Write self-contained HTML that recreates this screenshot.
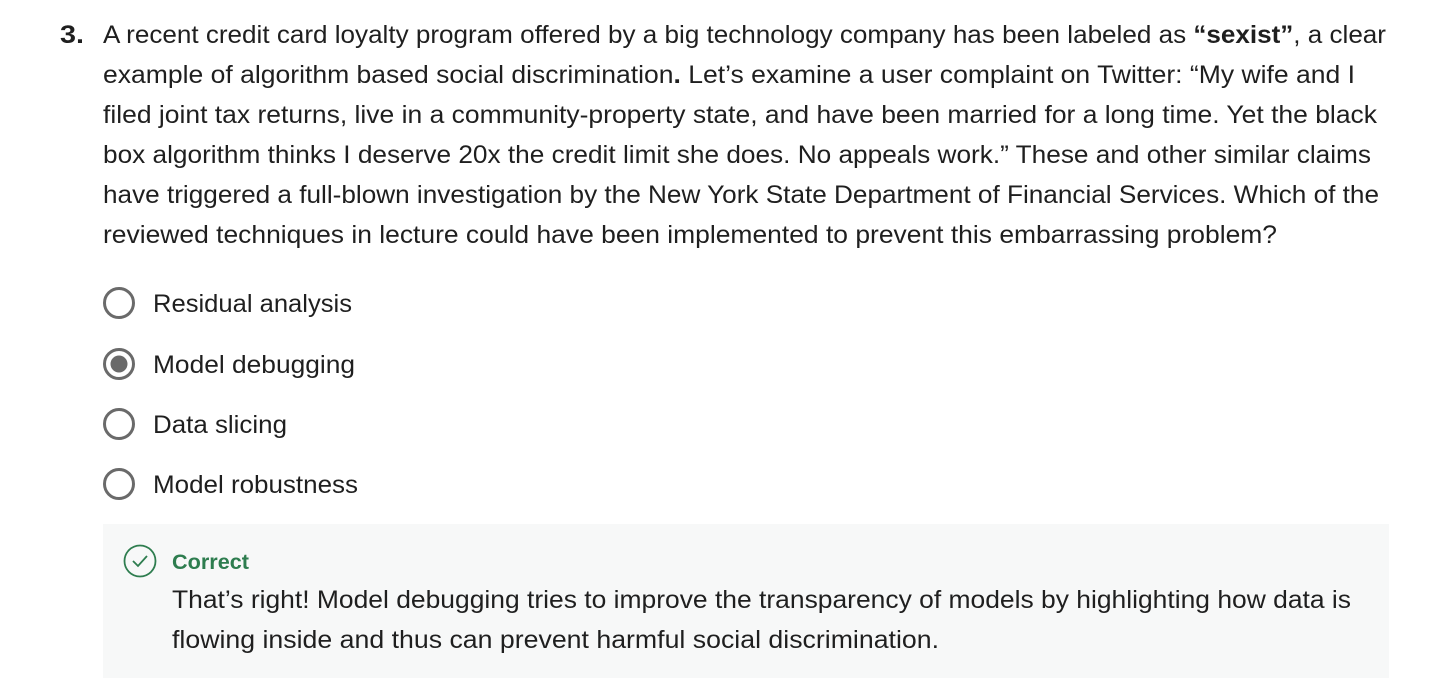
<!DOCTYPE html>
<html><head><meta charset="utf-8"><style>
html,body{margin:0;padding:0;background:#fff;width:1434px;height:696px;overflow:hidden}
svg{display:block}
text{font-family:"Liberation Sans",sans-serif;fill:#1f1f1f}
</style></head><body>
<svg width="1434" height="696" viewBox="0 0 1434 696" xmlns="http://www.w3.org/2000/svg">
<g font-size="25">
<text x="60" y="43" font-weight="bold" textLength="24" lengthAdjust="spacingAndGlyphs">3.</text>
<text x="103" y="43" textLength="1283" lengthAdjust="spacingAndGlyphs">A recent credit card loyalty program offered by a big technology company has been labeled as <tspan font-weight="bold">“sexist”</tspan>, a clear</text>
<text x="103" y="83" textLength="1252" lengthAdjust="spacingAndGlyphs">example of algorithm based social discrimination<tspan font-weight="bold">.</tspan> Let’s examine a user complaint on Twitter: “My wife and I</text>
<text x="103" y="123" textLength="1274" lengthAdjust="spacingAndGlyphs">filed joint tax returns, live in a community-property state, and have been married for a long time. Yet the black</text>
<text x="103" y="163" textLength="1268" lengthAdjust="spacingAndGlyphs">box algorithm thinks I deserve 20x the credit limit she does. No appeals work.” These and other similar claims</text>
<text x="103" y="203" textLength="1276" lengthAdjust="spacingAndGlyphs">have triggered a full-blown investigation by the New York State Department of Financial Services. Which of the</text>
<text x="103" y="243" textLength="1174" lengthAdjust="spacingAndGlyphs">reviewed techniques in lecture could have been implemented to prevent this embarrassing problem?</text>
</g>
<g fill="none" stroke="#6a6a6a" stroke-width="3">
<circle cx="119" cy="303" r="14.5"/>
<circle cx="119" cy="364" r="14.5"/>
<circle cx="119" cy="424" r="14.5"/>
<circle cx="119" cy="484" r="14.5"/>
</g>
<circle cx="119" cy="364" r="8.5" fill="#6a6a6a"/>
<g font-size="25">
<text x="153" y="312" textLength="199" lengthAdjust="spacingAndGlyphs">Residual analysis</text>
<text x="153" y="373" textLength="202" lengthAdjust="spacingAndGlyphs">Model debugging</text>
<text x="153" y="433" textLength="134" lengthAdjust="spacingAndGlyphs">Data slicing</text>
<text x="153" y="493" textLength="205" lengthAdjust="spacingAndGlyphs">Model robustness</text>
</g>
<rect x="103" y="524" width="1286" height="154" fill="#f7f8f8"/>
<circle cx="140" cy="561" r="15.5" fill="none" stroke="#2e7d4f" stroke-width="1.8"/>
<path d="M133 561 L138 566 L147 556" fill="none" stroke="#2e7d4f" stroke-width="1.8"/>
<text x="172" y="569" font-size="21" font-weight="bold" style="fill:#2e7d4f" textLength="77" lengthAdjust="spacingAndGlyphs">Correct</text>
<g font-size="25">
<text x="172" y="608" textLength="1179" lengthAdjust="spacingAndGlyphs">That’s right! Model debugging tries to improve the transparency of models by highlighting how data is</text>
<text x="172" y="648" textLength="767" lengthAdjust="spacingAndGlyphs">flowing inside and thus can prevent harmful social discrimination.</text>
</g>
</svg>
</body></html>
